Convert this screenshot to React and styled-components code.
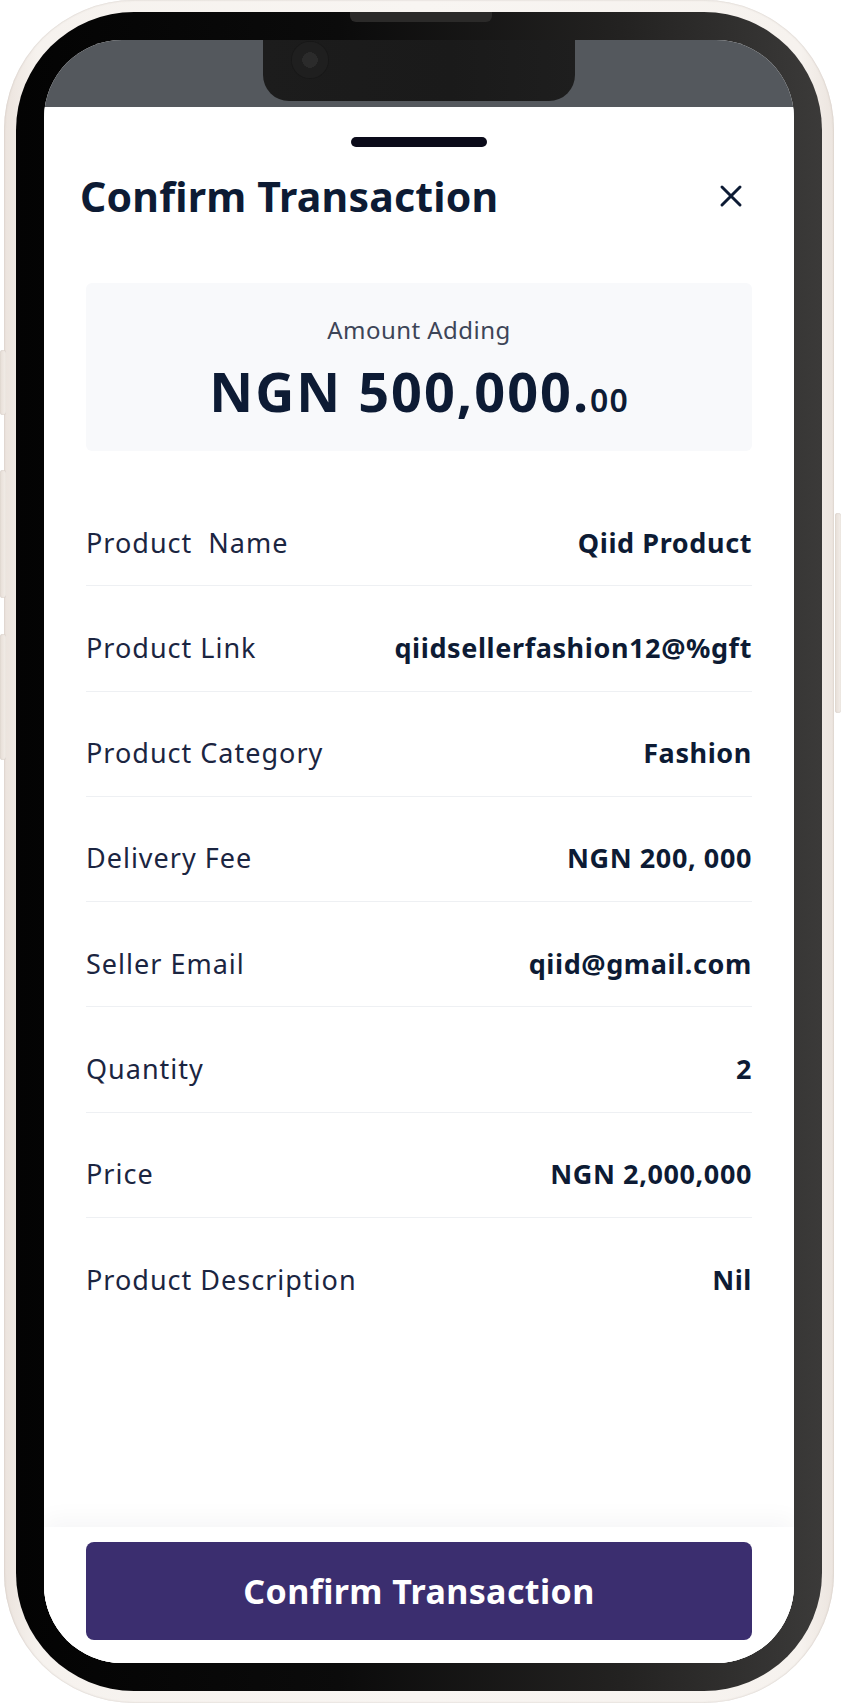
import React from "react";
import styled, { createGlobalStyle } from "styled-components";

const GlobalStyle = createGlobalStyle`
  * { box-sizing: border-box; }
  body {
    margin: 0;
    background: #ffffff;
    font-family: "Noto Sans", "Open Sans", sans-serif;
    -webkit-font-smoothing: antialiased;
  }
`;

const Page = styled.div`
  width: 842px;
  height: 1704px;
  padding: 0 8px 0 4px;
  position: relative;
`;

const Frame = styled.div`
  position: relative;
  width: 830px;
  height: 1703px;
  padding: 12px;
  border-radius: 130px;
  background: linear-gradient(90deg, #ebe3dd 0%, #f6f2ee 4%, #f8f5f2 50%, #f6f2ee 96%, #ece5df 100%);
  box-shadow: inset 0 0 2px rgba(120, 100, 90, 0.35);
`;

const SideButton = styled.div`
  position: absolute;
  top: ${(p) => p.top}px;
  height: ${(p) => p.height}px;
  width: 6px;
  ${(p) => (p.right ? "right: -7px;" : "left: -4px;")}
  border-radius: 3px;
  background: linear-gradient(90deg, #e6ddd6, #f3eee9);
  box-shadow: inset 0 0 1px rgba(120, 100, 90, 0.4);
`;

const Bezel = styled.div`
  position: relative;
  height: 100%;
  padding: 28px;
  border-radius: 118px;
  background: linear-gradient(90deg, #030303 0%, #0b0b0b 40%, #232221 75%, #3b3a39 100%);
`;

const Speaker = styled.div`
  position: absolute;
  top: 0;
  left: 334px;
  width: 142px;
  height: 10px;
  border-radius: 0 0 6px 6px;
  background: #2b2a29;
`;

const Screen = styled.div`
  position: relative;
  height: 100%;
  display: flex;
  flex-direction: column;
  border-radius: 78px;
  overflow: hidden;
  background: #ffffff;
`;

const StatusArea = styled.div`
  height: 67px;
  flex-shrink: 0;
  background: #54585d;
`;

const Notch = styled.div`
  position: absolute;
  top: 0;
  left: 219px;
  width: 312px;
  height: 61px;
  border-radius: 0 0 26px 26px;
  background: linear-gradient(90deg, #1c1c1c, #1a1a1a 60%, #1e1e1e);
`;

const Camera = styled.div`
  position: absolute;
  left: 29px;
  top: 2px;
  width: 36px;
  height: 36px;
  border-radius: 50%;
  background: radial-gradient(circle at 50% 50%, #2b2b2b 0 30%, #1f1f1f 31% 100%);
  box-shadow: 0 0 0 1px #181818;
`;

const Sheet = styled.div`
  flex: 1;
  display: flex;
  flex-direction: column;
  background: #ffffff;
`;

const Body = styled.div`
  flex: 1;
  display: flex;
  flex-direction: column;
`;

const Handle = styled.div`
  width: 136px;
  height: 10px;
  margin: 30px auto 0;
  border-radius: 5px;
  background: #0b0b1a;
`;

const Header = styled.div`
  display: flex;
  align-items: center;
  justify-content: space-between;
  margin-top: 24px;
  padding: 0 51px 0 36px;
`;

const Title = styled.h1`
  margin: 0;
  font-size: 41px;
  line-height: 50px;
  letter-spacing: 0.2px;
  font-weight: 700;
  color: #0d1b34;
`;

const CloseButton = styled.button`
  display: flex;
  width: 24px;
  height: 24px;
  padding: 0;
  border: 0;
  background: none;
  color: #0d1b34;
  cursor: pointer;
`;

const AmountCard = styled.div`
  margin: 62px 42px 0;
  padding: 33px 0 29px;
  display: flex;
  flex-direction: column;
  align-items: center;
  gap: 16px;
  border-radius: 6px;
  background: #f8f9fb;
`;

const AmountLabel = styled.span`
  font-size: 24px;
  line-height: 28px;
  letter-spacing: 0.45px;
  color: #3d4557;
`;

const AmountValue = styled.span`
  font-size: 54px;
  line-height: 62px;
  letter-spacing: 2px;
  font-weight: 700;
  color: #0d1b34;
`;

const Cents = styled.span`
  font-size: 32px;
  line-height: 1;
  letter-spacing: 1px;
  font-weight: 600;
`;

const DetailList = styled.div`
  margin: 30px 42px 0;
  display: flex;
  flex-direction: column;
`;

const Row = styled.div`
  display: flex;
  align-items: center;
  justify-content: space-between;
  padding: 46.5px 0 27.8px;
  border-bottom: 1px solid #eef0f3;
  &:last-child { border-bottom: 0; }
`;

const Label = styled.span`
  font-size: 27px;
  line-height: 30px;
  letter-spacing: 1px;
  color: #1b2541;
  white-space: pre;
`;

const Value = styled.span`
  font-size: 27px;
  line-height: 30px;
  letter-spacing: 0.6px;
  font-weight: 700;
  color: #0d1b34;
`;

const Footer = styled.div`
  height: 136px;
  flex-shrink: 0;
  padding: 15px 42px 23px;
  background: #ffffff;
  box-shadow: 0 -8px 22px rgba(20, 30, 40, 0.04);
`;

const ConfirmButton = styled.button`
  width: 100%;
  height: 98px;
  border: 0;
  border-radius: 8px;
  background: #3b2e6f;
  color: #ffffff;
  font-family: "Noto Sans", "Open Sans", sans-serif;
  font-size: 34px;
  letter-spacing: 0.4px;
  font-weight: 700;
  cursor: pointer;
`;

const details = [
  ["Product  Name", "Qiid Product"],
  ["Product Link", "qiidsellerfashion12@%gft"],
  ["Product Category", "Fashion"],
  ["Delivery Fee", "NGN 200, 000"],
  ["Seller Email", "qiid@gmail.com"],
  ["Quantity", "2"],
  ["Price", "NGN 2,000,000"],
  ["Product Description", "Nil"],
];

const CloseIcon = () => (
  <svg width="24" height="24" viewBox="0 0 24 24" fill="none">
    <path d="M3 3L21 21M21 3L3 21" stroke="currentColor" strokeWidth="3" strokeLinecap="round" />
  </svg>
);

export default function App() {
  return (
    <>
      <GlobalStyle />
      <Page>
        <Frame>
          <SideButton top={350} height={65} />
          <SideButton top={470} height={128} />
          <SideButton top={634} height={126} />
          <SideButton right top={513} height={200} />
          <Bezel>
            <Speaker />
            <Screen>
              <StatusArea />
              <Notch>
                <Camera />
              </Notch>
              <Sheet>
                <Body>
                  <Handle />
                  <Header>
                    <Title>Confirm Transaction</Title>
                    <CloseButton aria-label="Close">
                      <CloseIcon />
                    </CloseButton>
                  </Header>
                  <AmountCard>
                    <AmountLabel>Amount Adding</AmountLabel>
                    <AmountValue>
                      NGN 500,000.<Cents>00</Cents>
                    </AmountValue>
                  </AmountCard>
                  <DetailList>
                    {details.map(([label, value]) => (
                      <Row key={label}>
                        <Label>{label}</Label>
                        <Value>{value}</Value>
                      </Row>
                    ))}
                  </DetailList>
                </Body>
                <Footer>
                  <ConfirmButton>Confirm Transaction</ConfirmButton>
                </Footer>
              </Sheet>
            </Screen>
          </Bezel>
        </Frame>
      </Page>
    </>
  );
}
